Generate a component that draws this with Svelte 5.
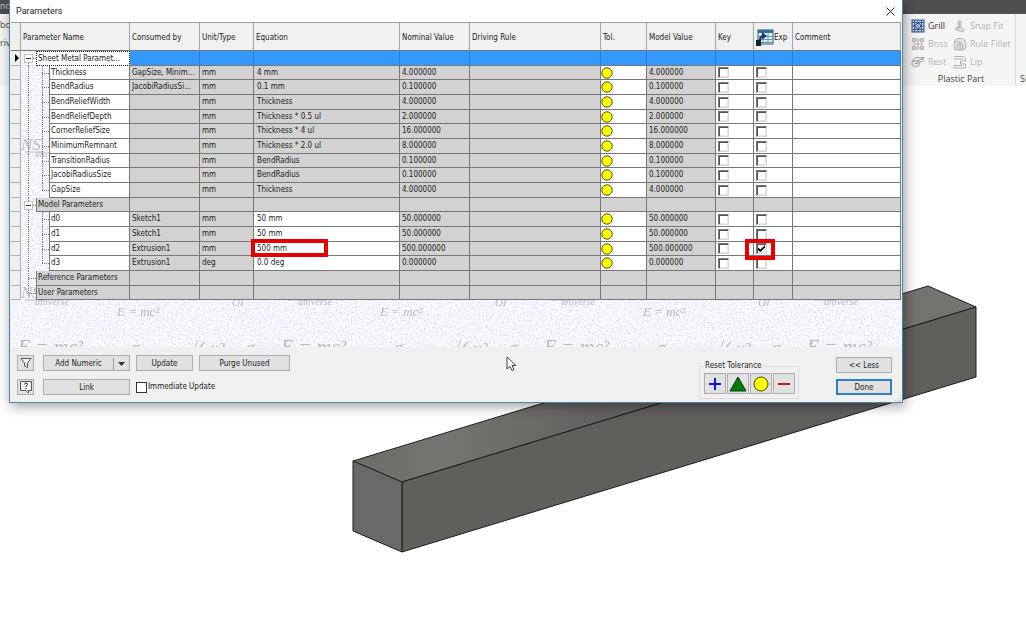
<script lang="ts">
	interface Param {
		name: string;
		usedBy?: string;
		unit: string;
		equation: string;
		value: string;
		exported?: boolean;
		marked?: boolean;
	}

	interface Group {
		title: string;
		open: boolean;
		editable?: boolean;
		params: Param[];
	}

	let groups: Group[] = $state([
		{
			title: 'Sheet Metal Paramet...',
			open: true,
			params: [
				{ name: 'Thickness', usedBy: 'GapSize, Minim...', unit: 'mm', equation: '4 mm', value: '4.000000' },
				{ name: 'BendRadius', usedBy: 'JacobiRadiusSi...', unit: 'mm', equation: '0.1 mm', value: '0.100000' },
				{ name: 'BendReliefWidth', unit: 'mm', equation: 'Thickness', value: '4.000000' },
				{ name: 'BendReliefDepth', unit: 'mm', equation: 'Thickness * 0.5 ul', value: '2.000000' },
				{ name: 'CornerReliefSize', unit: 'mm', equation: 'Thickness * 4 ul', value: '16.000000' },
				{ name: 'MinimumRemnant', unit: 'mm', equation: 'Thickness * 2.0 ul', value: '8.000000' },
				{ name: 'TransitionRadius', unit: 'mm', equation: 'BendRadius', value: '0.100000' },
				{ name: 'JacobiRadiusSize', unit: 'mm', equation: 'BendRadius', value: '0.100000' },
				{ name: 'GapSize', unit: 'mm', equation: 'Thickness', value: '4.000000' }
			]
		},
		{
			title: 'Model Parameters',
			open: true,
			editable: true,
			params: [
				{ name: 'd0', usedBy: 'Sketch1', unit: 'mm', equation: '50 mm', value: '50.000000' },
				{ name: 'd1', usedBy: 'Sketch1', unit: 'mm', equation: '50 mm', value: '50.000000' },
				{ name: 'd2', usedBy: 'Extrusion1', unit: 'mm', equation: '500 mm', value: '500.000000', exported: true, marked: true },
				{ name: 'd3', usedBy: 'Extrusion1', unit: 'deg', equation: '0.0 deg', value: '0.000000' }
			]
		},
		{ title: 'Reference Parameters', open: false, params: [] },
		{ title: 'User Parameters', open: false, params: [] }
	]);

	let immediate = $state(false);
</script>

<div class="app">
	<header class="app-bar">no</header>
	<div class="ribbon">
		<div class="ribbon-left">
			<span>bc</span>
			<span>rive</span>
		</div>
		<section class="panel">
			<div class="tools">
				<button class="tool on" type="button">
					<svg viewBox="0 0 14 14" width="14" height="14" aria-hidden="true">
						<rect x="1" y="1" width="12" height="12" fill="#c3d3ee" stroke="#2f4a7d" />
						<path d="M3.5 1v12M7 1v12M10.500 1v12M1 3.500h12M1 7h12M1 10.500h12" stroke="#3f5f9c" fill="none" />
						<circle cx="7" cy="7" r="2.500" fill="#e6eefb" stroke="#24365c" />
						<circle cx="7" cy="7" r="0.800" fill="#24365c" />
					</svg>
					Grill
				</button>
				<button class="tool" type="button" disabled>
					<svg viewBox="0 0 14 14" width="14" height="14" aria-hidden="true">
						<path d="M5 2.500 Q6.500 0 8 2.500 V9 L11.500 11.500 L9 13 L5 11 Z M6.500 3v6L3 8.500 2 10l4 2" fill="#e4e4e4" stroke="#b5b5b5" />
					</svg>
					Snap Fit
				</button>
				<button class="tool" type="button" disabled>
					<svg viewBox="0 0 14 14" width="14" height="14" aria-hidden="true">
						<path d="M1.500 1.500h3v3h-3zM9.500 1.500h3v3h-3zM1.500 9.500h3v3h-3zM9.500 9.500h3v3h-3zM7 1v12M4.500 3h5M4.500 11h5M3 4.500v5M11 4.500v5M4 7h6" fill="#dedede" stroke="#b0b0b0" />
					</svg>
					Boss
				</button>
				<button class="tool" type="button" disabled>
					<svg viewBox="0 0 14 14" width="14" height="14" aria-hidden="true">
						<path d="M1 5 L4 1.500 H9 Q13 3 13 7 V11 L10 13 H1.500 Z" fill="#e4e4e4" stroke="#b5b5b5" />
						<path d="M1.500 5H6Q10 6 10 13M4 13V9q0-2 3-2v6" fill="none" stroke="#aaa" />
					</svg>
					Rule Fillet
				</button>
				<button class="tool" type="button" disabled>
					<svg viewBox="0 0 14 14" width="14" height="14" aria-hidden="true">
						<path d="M1 6 L4 2.500 H13 L12 6 L8 8 V11 L4 12 L1 10 Z" fill="#e6e6e6" stroke="#aaa" />
						<path d="M1 6h6l1 2M7 6l5-3M4 8.500h3" fill="none" stroke="#999" />
					</svg>
					Rest
				</button>
				<button class="tool" type="button" disabled>
					<svg viewBox="0 0 14 14" width="14" height="14" aria-hidden="true">
						<path d="M1 1.500h9.500l2 2V6h-5v3h5v4H1v-2.500h8.500M1 4h9" fill="none" stroke="#b0b0b0" />
					</svg>
					Lip
				</button>
			</div>
			<div class="panel-name">Plastic Part</div>
		</section>
		<section class="panel-cut">Si</section>
	</div>

	<main class="viewport">
		<svg class="solid" viewBox="0 0 1026 554" aria-hidden="true">
			<defs>
				<linearGradient id="top" x1="0" x2="1">
					<stop offset="0" stop-color="#6d6c69" />
					<stop offset="0.15" stop-color="#757470" />
					<stop offset="0.400" stop-color="#62615f" />
					<stop offset="1" stop-color="#767571" />
				</linearGradient>
			</defs>
			<g stroke="#1c1c1c" stroke-linejoin="round">
				<path d="M353 375 L928 200 L976 221 L402 396 Z" fill="url(#top)" />
				<path d="M402 396 L976 221 V291 L402 466 Z" fill="#605f5c" />
				<path d="M353 375 L402 396 V466 L353 445 Z" fill="#6a6967" />
			</g>
		</svg>
	</main>

	<div class="dialog" role="dialog" aria-labelledby="dialog-title">
		<div class="titlebar">
			<h1 id="dialog-title">Parameters</h1>
			<button class="close" type="button" aria-label="Close">
				<svg viewBox="0 0 9 9" width="9" height="9"><path d="M0.500 0.500l8 8M8.500 0.500l-8 8" stroke="#333" /></svg>
			</button>
		</div>

		<div class="pane">
			<svg class="paper" width="100%" height="100%" aria-hidden="true">
				<defs>
					<filter id="grain" x="0" y="0" width="100%" height="100%">
						<feTurbulence type="fractalNoise" baseFrequency="0.6" numOctaves="2" seed="4" />
						<feColorMatrix values="0 0 0 0 0.72  0 0 0 0 0.7  0 0 0 0 0.92  3 0 0 0 -1.350" />
					</filter>
					<pattern id="formulas" width="263" height="148" patternUnits="userSpaceOnUse">
						<g class="formula">
							<text x="106" y="146" font-size="13">E = mc²</text>
							<text x="221" y="136" font-size="11">OI</text>
							<path d="M14 130h20" stroke="#b9b9bd" />
							<text x="24" y="135" font-size="10">universe</text>
							<text x="10" y="128" font-size="17">NS</text>
						</g>
					</pattern>
					<pattern id="formulas-large" y="300" width="263" height="40" patternUnits="userSpaceOnUse">
						<g class="formula">
							<text x="7" y="32" font-size="20">E = mc²</text>
							<text x="77" y="32" font-size="14">uu</text>
							<text x="120" y="32" font-size="18">σ</text>
							<text x="176" y="34" font-size="20">√( x²</text>
							<text x="235" y="32" font-size="18">σ</text>
						</g>
					</pattern>
				</defs>
				<rect width="100%" height="100%" fill="#fcfcff" />
				<rect width="100%" height="100%" filter="url(#grain)" />
				<rect width="100%" height="296" fill="url(#formulas)" />
				<rect y="300" width="100%" height="40" fill="url(#formulas-large)" />
			</svg>

			<table>
				<colgroup>
					<col class="c-mark" />
					<col class="c-root" />
					<col class="c-branch" />
					<col class="c-name" />
					<col class="c-value" />
					<col class="c-unit" />
					<col class="c-equation" />
					<col class="c-value" />
					<col class="c-rule" />
					<col class="c-tol" />
					<col class="c-model" />
					<col class="c-key" />
					<col class="c-export" />
					<col />
				</colgroup>
				<thead>
					<tr>
						<td></td>
						<th colspan="3">Parameter Name</th>
						<th>Consumed by</th>
						<th>Unit/Type</th>
						<th>Equation</th>
						<th>Nominal Value</th>
						<th>Driving Rule</th>
						<th>Tol.</th>
						<th>Model Value</th>
						<th>Key</th>
						<th>
							<span class="export-head">
								<svg viewBox="0 0 18 18" width="18" height="18" aria-hidden="true">
									<rect x="2" y="1" width="15" height="14" fill="#dff0f7" stroke="#2c5876" />
									<path d="M2 2.500h15" stroke="#2f6f98" stroke-width="3" />
									<path d="M2 7.500h15M2 10.500h15M2 13.500h15M7 3v12M12 3v12" stroke="#5b9ab8" />
									<rect x="0" y="11" width="5" height="6" fill="#15202b" />
									<path d="M3 11 Q3 7 6 6 V3 L11 7 L6 10.500 V8.500 Q5 9 5 11 Z" fill="#1d3263" />
								</svg>
								Exp
							</span>
						</th>
						<th>Comment</th>
					</tr>
				</thead>
				<tbody>
					{#each groups as group, g}
						<tr class="group" class:selected={g === 0}>
							<td class="mark">
								{#if g === 0}
									<svg viewBox="0 0 4 8" width="4" height="8"><path d="M0 0l4 4-4 4z" fill="#000" /></svg>
								{/if}
							</td>
							<td class="root" class:first={g === 0} class:last={g === groups.length - 1}>
								{#if group.params.length}
									<button
										class="expander"
										type="button"
										aria-expanded={group.open}
										aria-label="Toggle {group.title}"
										onclick={() => (group.open = !group.open)}
									>
										<svg viewBox="0 0 7 7" width="7" height="7">
											<path d={group.open ? 'M1 3.500h5' : 'M1 3.500h5M3.500 1v5'} stroke="#333" />
										</svg>
									</button>
								{/if}
							</td>
							<th class="label" colspan="2" scope="rowgroup">{group.title}</th>
							{#each Array(10) as _}
								<td></td>
							{/each}
						</tr>
						{#if group.open}
							{#each group.params as param, i}
								<tr class:editable={group.editable}>
									<td class="mark"></td>
									<td class="root"></td>
									<td class="branch" class:last={i === group.params.length - 1}></td>
									<th class="label" scope="row">{param.name}</th>
									<td>{param.usedBy ?? ''}</td>
									<td>{param.unit}</td>
									<td class="equation">
										{param.equation}
										{#if param.marked}<span class="callout wide"></span>{/if}
									</td>
									<td>{param.value}</td>
									<td></td>
									<td class="light tol">
										<svg viewBox="0 0 12 12" width="12" height="12">
											<circle cx="6" cy="6" r="5.200" fill="#ff0" stroke="#55550a" />
										</svg>
									</td>
									<td>{param.value}</td>
									<td class="light tick"><input type="checkbox" aria-label="Key {param.name}" /></td>
									<td class="light tick">
										<input type="checkbox" aria-label="Export {param.name}" bind:checked={param.exported} />
										{#if param.marked}<span class="callout"></span>{/if}
									</td>
									<td class="light"></td>
								</tr>
							{/each}
						{/if}
					{/each}
				</tbody>
			</table>
		</div>

		<footer>
			<div class="actions">
				<div class="row">
					<button class="btn icon" type="button" aria-label="Filter">
						<svg viewBox="0 0 12 12" width="12" height="12">
							<path d="M1 1.500h10L7.500 6v4.500l-3-1.500V6z" fill="#f8f8f8" stroke="#555" />
						</svg>
					</button>
					<button class="btn add" type="button">
						<span>Add Numeric</span>
						<i></i>
						<svg viewBox="0 0 7 4" width="7" height="4"><path d="M0 0h7L3.500 4z" fill="#333" /></svg>
					</button>
					<button class="btn update" type="button">Update</button>
					<button class="btn purge" type="button">Purge Unused</button>
				</div>
				<div class="row">
					<button class="btn icon" type="button" aria-label="Help">
						<svg viewBox="0 0 14 14" width="14" height="14">
							<path d="M1.500 1.500h11v9h-3V13L7 10.500H1.500z" fill="#f8f8f8" stroke="#555" />
							<path d="M5.500 4.500Q5.500 3 7 3t1.500 1.300Q8.500 5.300 7 6v1M7 8v1.300" fill="none" stroke="#222" />
						</svg>
					</button>
					<button class="btn link" type="button">Link</button>
					<label class="immediate">
						<input type="checkbox" bind:checked={immediate} />
						Immediate Update
					</label>
				</div>
			</div>

			<fieldset>
				<legend>Reset Tolerance</legend>
				<button class="btn reset" type="button" aria-label="Upper">
					<svg viewBox="0 0 18 18" width="18" height="18"><path d="M9 3v12M3 9h12" stroke="#1010e8" stroke-width="2" /></svg>
				</button>
				<button class="btn reset" type="button" aria-label="Median">
					<svg viewBox="0 0 18 18" width="18" height="18"><path d="M9 2l8 14H1z" fill="#087a08" stroke="#043c04" /></svg>
				</button>
				<button class="btn reset" type="button" aria-label="Nominal">
					<svg viewBox="0 0 18 18" width="18" height="18"><circle cx="9" cy="9" r="7" fill="#ff0" stroke="#444400" /></svg>
				</button>
				<button class="btn reset" type="button" aria-label="Lower">
					<svg viewBox="0 0 18 18" width="18" height="18"><path d="M3 9h12" stroke="#e01020" stroke-width="2" /></svg>
				</button>
			</fieldset>

			<div class="confirm">
				<button class="btn" type="button">&lt;&lt; Less</button>
				<button class="btn default" type="button">Done</button>
			</div>
		</footer>

		<svg class="grip" viewBox="0 0 7 7" width="7" height="7" aria-hidden="true">
			<path d="M5 0h1v1h-1zM5 2.500h1v1h-1zM5 5h1v1h-1zM2.500 2.500h1v1h-1zM2.500 5h1v1h-1zM0 5h1v1h-1z" fill="#b5b5b5" />
		</svg>
	</div>

	<svg class="pointer" viewBox="0 0 11 16" width="11" height="16" aria-hidden="true">
		<path d="M1 1v12l3-2.500 2 4 2-1-2-4h4z" fill="#fff" stroke="#444" />
	</svg>
</div>

<style>
	:global(body) {
		margin: 0;
		background: #fff;
	}

	.app {
		position: relative;
		display: flex;
		flex-direction: column;
		min-height: 100vh;
		overflow: hidden;
		color: #1c1c1c;
		font-family: 'DejaVu Sans Condensed', 'Noto Sans', sans-serif;
		font-size: 8px;
		line-height: 12px;
	}

	button,
	input {
		margin: 0;
		font: inherit;
		color: inherit;
	}

	svg {
		display: block;
		flex: none;
	}

	/* application behind the dialog */

	.app-bar {
		height: 14px;
		background: #4f4f4f;
		color: #c8c8c8;
		font-family: 'Open Sans', sans-serif;
		font-size: 9px;
	}

	.ribbon {
		display: flex;
		height: 72px;
		background: #f5f5f5;
		color: #444;
		font-family: 'Open Sans', sans-serif;
		font-size: 9px;
	}

	.ribbon-left {
		flex: 1;
		display: flex;
		flex-direction: column;
		gap: 6px;
		padding-top: 5px;
	}

	.panel {
		width: 104px;
		padding: 3px 0 0 8px;
		border-right: 1px solid #d8d8d8;
	}

	.tools {
		display: grid;
		grid-template-columns: 42px 1fr;
		grid-auto-rows: 18px;
	}

	.tool {
		display: flex;
		align-items: center;
		gap: 3px;
		padding: 0;
		border: 0;
		background: none;
		color: #b3b3b3;
		white-space: nowrap;
	}

	.tool.on {
		color: #333;
	}

	.panel-name {
		padding: 2px 4px 0 0;
		text-align: center;
	}

	.panel-cut {
		width: 10px;
		padding: 59px 0 0 4px;
		box-sizing: border-box;
		overflow: hidden;
	}

	.viewport {
		flex: 1;
	}

	.solid {
		width: 100%;
	}

	/* dialog window */

	.dialog {
		position: absolute;
		top: 0;
		left: 9px;
		right: 123px;
		border: 1px solid #4686ad;
		border-top: 0;
		background: #f0f0f0;
		box-shadow: 2px 3px 12px rgba(0, 0, 0, 0.4);
	}

	.titlebar {
		display: flex;
		align-items: center;
		justify-content: space-between;
		height: 22px;
		padding: 0 7px 0 6px;
		background: #fff;
	}

	h1 {
		margin: 0;
		font-size: 9px;
		font-weight: 400;
		font-family: Roboto, sans-serif;
	}

	.close {
		padding: 0;
		border: 0;
		background: none;
	}

	.pane {
		position: relative;
		margin: 0 1px;
		padding-bottom: 47px;
	}

	.paper {
		position: absolute;
		inset: 0;
	}

	.formula {
		fill: #b9b9bd;
		font-family: 'Liberation Serif', serif;
		font-style: italic;
	}

	table {
		position: relative;
		width: 100%;
		table-layout: fixed;
		border-spacing: 0;
		border-top: 1px solid #a0a0a0;
	}

	.c-mark { width: 10px; }
	.c-root { width: 15px; }
	.c-branch { width: 13px; }
	.c-name { width: 81px; }
	.c-value { width: 70px; }
	.c-unit { width: 54px; }
	.c-equation { width: 146px; }
	.c-rule { width: 131px; }
	.c-tol { width: 46px; }
	.c-model { width: 69px; }
	.c-key { width: 38px; }
	.c-export { width: 39px; }

	th,
	td {
		box-sizing: border-box;
		padding: 0 0 0 2px;
		border: solid #777;
		border-width: 0 1px 1px 0;
		font-weight: 400;
		text-align: left;
		white-space: nowrap;
	}

	thead th,
	thead td {
		height: 28px;
		padding-top: 3px;
		background: #f0f0f0;
		border-right-color: #a5a5a5;
	}

	.export-head {
		display: flex;
		align-items: center;
	}

	tbody tr {
		height: 15px;
	}

	tbody tr:nth-child(3n + 2) {
		height: 14px;
	}

	tbody td {
		background: #d2d2d2;
	}

	tbody .label {
		padding-left: 1px;
		border-left: 1px solid #777;
		background: #fff;
	}

	.group .label {
		background: #d2d2d2;
	}

	.selected td {
		background: #3399ff;
		border-right-color: #2c7fd0;
	}

	.selected .label {
		border: 1px dotted #222;
		background: #fff;
	}

	td.mark {
		padding-left: 4px;
		border-color: #b0b0b0;
		background: #efefef;
	}

	td.root,
	td.branch {
		--dots-y: repeating-linear-gradient(#777 0 1px, transparent 1px 2px);
		--dots-x: repeating-linear-gradient(90deg, #777 0 1px, transparent 1px 2px);
		padding: 0;
		border: 0;
		background: var(--dots-y) 7px 0 / 1px 100% no-repeat;
	}

	.group td.root {
		background:
			var(--dots-y) 7px 0 / 1px 100% no-repeat,
			var(--dots-x) 8px 50% / 7px 1px no-repeat;
	}

	.group td.root.first {
		background:
			var(--dots-y) 7px 100% / 1px 50% no-repeat,
			var(--dots-x) 8px 50% / 7px 1px no-repeat;
	}

	.group td.root.last {
		background:
			var(--dots-y) 7px 0 / 1px 50% no-repeat,
			var(--dots-x) 8px 50% / 7px 1px no-repeat;
	}

	td.branch {
		background:
			var(--dots-y) 6px 0 / 1px 100% no-repeat,
			var(--dots-x) 6px 50% / 7px 1px no-repeat;
	}

	td.branch.last {
		background:
			var(--dots-y) 6px 0 / 1px 50% no-repeat,
			var(--dots-x) 6px 50% / 7px 1px no-repeat;
	}

	.expander {
		display: block;
		margin-left: 3px;
		padding: 0;
		border: 1px solid #c4c4c4;
		background: #fff;
	}

	tbody .light,
	.editable .equation {
		background: #fff;
	}

	td.tol {
		padding-left: 0;
	}

	td.equation,
	td.tick {
		position: relative;
	}

	td.equation {
		padding-left: 3px;
	}

	input {
		display: block;
		appearance: none;
		box-sizing: border-box;
		width: 11px;
		height: 11px;
		border: 1px solid #777;
		background: #fff;
	}

	.tick input {
		border-color: #777 #d6d6d6 #d6d6d6 #777;
		box-shadow: inset 1px 1px #555, inset -1px -1px #e6e6e6;
	}

	input:checked::before {
		content: '';
		display: block;
		width: 7px;
		height: 7px;
		margin: 1px;
		background: #000;
		clip-path: polygon(0 35%, 35% 65%, 100% 0, 100% 35%, 35% 100%, 0 70%);
	}

	/* red frames drawn over the grid */
	.callout {
		position: absolute;
		top: -3px;
		left: -9px;
		z-index: 1;
		box-sizing: border-box;
		width: 30px;
		height: 21px;
		border: 4px solid #e80000;
		pointer-events: none;
	}

	.callout.wide {
		left: -3px;
		width: 77px;
		height: 18px;
	}

	/* footer */

	footer {
		display: flex;
		align-items: flex-end;
		padding: 8px 10px 7px 7px;
	}

	.actions {
		flex: 1;
		display: grid;
		gap: 8px;
	}

	.row {
		display: flex;
		gap: 6px;
	}

	.btn {
		display: flex;
		align-items: center;
		justify-content: center;
		box-sizing: border-box;
		height: 16px;
		padding: 2px 0 0;
		border: 1px solid #adadad;
		background: #e1e1e1;
	}

	.btn.icon {
		width: 17px;
		margin-right: 3px;
		padding: 0;
	}

	.add,
	.link {
		width: 87px;
	}

	.add span {
		flex: 1;
	}

	.add i {
		width: 1px;
		height: 12px;
		background: #999;
	}

	.add svg {
		margin: 0 4px;
	}

	.update {
		width: 57px;
	}

	.purge {
		width: 91px;
	}

	.immediate {
		display: flex;
		align-items: center;
		gap: 1px;
	}

	.immediate input {
		border-color: #333;
	}

	fieldset {
		display: flex;
		gap: 1px;
		margin: 0 37px -4px 0;
		padding: 1px 3px 4px 4px;
		border: 1px solid #dcdcdc;
	}

	legend {
		padding: 0 1px;
	}

	.btn.reset {
		width: 22px;
		height: 21px;
		padding: 0;
	}

	.confirm {
		display: grid;
		gap: 6px;
	}

	.confirm .btn {
		width: 56px;
	}

	.btn.default {
		border: 2px solid #2f7fc0;
	}

	.grip {
		position: absolute;
		right: 0;
		bottom: 0;
	}

	.pointer {
		position: absolute;
		top: 356px;
		left: 506px;
	}
</style>
